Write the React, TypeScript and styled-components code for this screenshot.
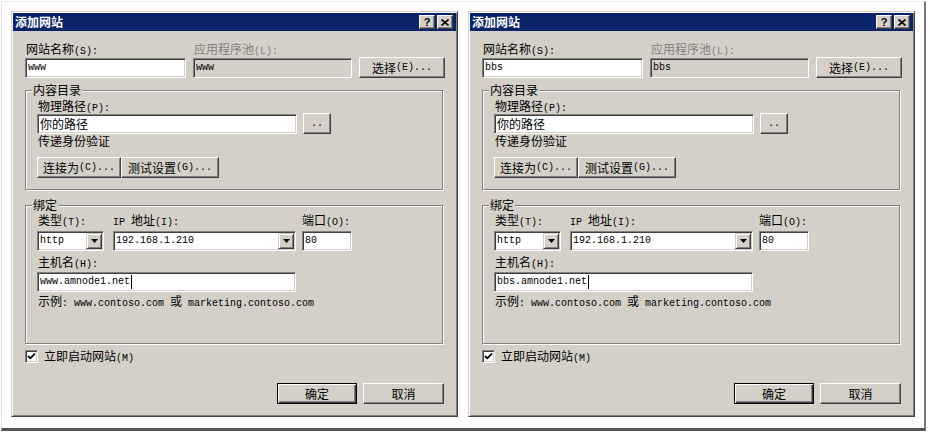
import React from 'react';
import styled, { createGlobalStyle } from 'styled-components';

const GlobalStyle = createGlobalStyle`
  html, body {
    margin: 0;
    padding: 0;
    background: #fff;
  }
  body {
    font-family: "Noto Sans CJK SC", "Liberation Sans", sans-serif;
    font-size: 12px;
    color: #000;
  }
`;

const FACE = '#d4d0c8';

const Frame = styled.div`
  box-sizing: border-box;
  width: 925px;
  height: 430px;
  margin: 1px 0 0 1px;
  background: #fff;
  border-left: 1px solid #e4e4e4;
  border-top: 1px solid #ececec;
  border-right: 2px solid #777;
  border-bottom: 3px solid #555;
  padding: 9px 0 0 9px;
  display: flex;
  gap: 10px;
  align-items: flex-start;
`;

const Window = styled.div`
  box-sizing: border-box;
  width: 447px;
  background: ${FACE};
  border: 1px solid;
  border-color: ${FACE} #404040 #404040 ${FACE};
  box-shadow: inset 1px 1px 0 #fff, inset -1px -1px 0 #808080;
  padding: 1px 1px 12px 1px;
`;

const TitleBar = styled.div`
  height: 18px;
  background: #0a246a;
  display: flex;
  align-items: center;
  padding: 0 3px 0 2px;
  color: #fff;
  font-weight: 700;
  font-size: 12px;
`;

const TitleText = styled.div`
  flex: 1;
  line-height: 18px;
`;

const CaptionButtons = styled.div`
  display: flex;
  gap: 2px;
`;

const CaptionButton = styled.div`
  box-sizing: border-box;
  width: 16px;
  height: 14px;
  background: ${FACE};
  border: 1px solid;
  border-color: #fff #404040 #404040 #fff;
  box-shadow: inset -1px -1px 0 #808080;
  display: flex;
  align-items: center;
  justify-content: center;
  color: #000;
  font-family: "Liberation Sans", sans-serif;
  font-weight: 700;
  font-size: 11px;
  line-height: 1;
`;

const Body = styled.div`
  padding: 11px 12px 0 12px;
`;

const TopGrid = styled.div`
  display: grid;
  grid-template-columns: 161px 159px 86px;
  column-gap: 7px;
  row-gap: 1px;
  align-items: end;
`;

const Label = styled.div<{ $disabled?: boolean; $indent?: number }>`
  height: 14px;
  line-height: 14px;
  white-space: nowrap;
  padding-left: ${p => p.$indent ?? 1}px;
  color: ${p => (p.$disabled ? '#808080' : '#000')};
`;

const Field = styled.div<{ $w?: number; $disabled?: boolean }>`
  box-sizing: border-box;
  height: 20px;
  width: ${p => (p.$w ? `${p.$w}px` : '100%')};
  flex: none;
  background: ${p => (p.$disabled ? FACE : '#fff')};
  border: 1px solid;
  border-color: #808080 #fff #fff #808080;
  box-shadow: inset 1px 1px 0 #404040, inset -1px -1px 0 ${FACE};
  padding: 0 2px;
  display: flex;
  align-items: center;
  white-space: nowrap;
  overflow: hidden;
`;

const FieldValue = styled.div`
  flex: 1;
  display: flex;
  align-items: center;
  line-height: 14px;
`;

const Caret = styled.span`
  display: inline-block;
  width: 1px;
  height: 14px;
  background: #000;
  margin-left: 1px;
`;

const DropButton = styled.div`
  box-sizing: border-box;
  width: 16px;
  height: 16px;
  margin-right: -1px;
  background: ${FACE};
  border: 1px solid;
  border-color: ${FACE} #404040 #404040 ${FACE};
  box-shadow: inset 1px 1px 0 #fff, inset -1px -1px 0 #808080;
  display: flex;
  align-items: center;
  justify-content: center;
`;

const Button = styled.button<{ $w: number; $default?: boolean }>`
  box-sizing: border-box;
  width: ${p => p.$w}px;
  height: 21px;
  flex: none;
  margin: 0;
  padding: 0;
  background: ${FACE};
  font-family: inherit;
  font-size: 12px;
  color: #000;
  line-height: 14px;
  border: 1px solid;
  border-color: ${p => (p.$default ? '#000' : `#fff #404040 #404040 #fff`)};
  box-shadow: ${p =>
    p.$default
      ? `inset 1px 1px 0 #fff, inset -1px -1px 0 #404040, inset -2px -2px 0 #808080`
      : `inset -1px -1px 0 #808080`};
  display: flex;
  align-items: center;
  justify-content: center;
  white-space: nowrap;
`;

const Group = styled.fieldset<{ $pb: number }>`
  margin: 0 1px 0 0;
  padding: 0 11px ${p => p.$pb}px 11px;
  border: 1px solid #808080;
  box-shadow: inset 1px 1px 0 #fff, 1px 1px 0 #fff;
  min-width: 0;
`;

const Legend = styled.legend`
  margin-left: -5px;
  padding: 0 1px;
  line-height: 14px;
  background: ${FACE};
`;

const Row = styled.div<{ $gap: number; $mt?: number }>`
  display: flex;
  align-items: flex-end;
  gap: ${p => p.$gap}px;
  margin-top: ${p => p.$mt ?? 0}px;
`;

const Stack = styled.div<{ $mt?: number }>`
  display: flex;
  flex-direction: column;
  margin-top: ${p => p.$mt ?? 0}px;
`;

const BindRow = styled.div`
  display: flex;
  align-items: flex-end;
`;

const BindCell = styled.div<{ $ml?: number }>`
  display: flex;
  flex-direction: column;
  gap: 4px;
  margin-left: ${p => p.$ml ?? 0}px;
`;

const CheckRow = styled.div`
  display: flex;
  align-items: center;
  gap: 6px;
  margin-top: 5px;
  height: 14px;
`;

const CheckBox = styled.div`
  box-sizing: border-box;
  width: 13px;
  height: 13px;
  background: #fff;
  border: 1px solid;
  border-color: #808080 #fff #fff #808080;
  box-shadow: inset 1px 1px 0 #404040, inset -1px -1px 0 ${FACE};
  display: flex;
  align-items: center;
  justify-content: center;
`;

const Footer = styled.div`
  display: flex;
  justify-content: flex-end;
  gap: 6px;
  margin-top: 20px;
`;

const Latin = styled.span`
  font-family: "Liberation Mono", "DejaVu Sans Mono", monospace;
  font-size: 10px;
  white-space: pre;
`;

const isLatin = (s: string) => /^[\u0000-\u00ff]+$/.test(s);

const T = ({ children }: { children: string }) => {
  const parts = children.split(/([\u0000-\u00ff]+)/).filter(Boolean);
  return (
    <>
      {parts.map((p, i) => (isLatin(p) ? <Latin key={i}>{p}</Latin> : <span key={i}>{p}</span>))}
    </>
  );
};

const Arrow = () => (
  <svg width="7" height="4" viewBox="0 0 7 4">
    <path d="M0 0H7L3.5 4Z" fill="#000" />
  </svg>
);

const CloseGlyph = () => (
  <svg width="8" height="7" viewBox="0 0 8 7">
    <path d="M0.5 0.5L7.5 6.5M7.5 0.5L0.5 6.5" stroke="#000" strokeWidth="1.6" />
  </svg>
);

const Check = () => (
  <svg width="9" height="9" viewBox="0 0 9 9">
    <path d="M1 4L3.3 6.3L8 1.6" stroke="#000" strokeWidth="1.8" fill="none" />
  </svg>
);

const Combo = ({ w, value }: { w: number; value: string }) => (
  <Field $w={w}>
    <FieldValue>
      <T>{value}</T>
    </FieldValue>
    <DropButton>
      <Arrow />
    </DropButton>
  </Field>
);

const AddSiteDialog = ({ site }: { site: string }) => (
  <Window>
    <TitleBar>
      <TitleText>添加网站</TitleText>
      <CaptionButtons>
        <CaptionButton>?</CaptionButton>
        <CaptionButton>
          <CloseGlyph />
        </CaptionButton>
      </CaptionButtons>
    </TitleBar>
    <Body>
      <TopGrid>
        <Label>
          <T>网站名称(S):</T>
        </Label>
        <Label $disabled>
          <T>应用程序池(L):</T>
        </Label>
        <div />
        <Field>
          <FieldValue>
            <T>{site}</T>
          </FieldValue>
        </Field>
        <Field $disabled>
          <FieldValue>
            <T>{site}</T>
          </FieldValue>
        </Field>
        <Button $w={86}>
          <T>选择(E)...</T>
        </Button>
      </TopGrid>

      <Stack $mt={5}>
        <Group $pb={11}>
          <Legend>内容目录</Legend>
          <Stack $mt={2}>
            <Label>
              <T>物理路径(P):</T>
            </Label>
            <Row $gap={6}>
              <Field $w={260}>
                <FieldValue>你的路径</FieldValue>
              </Field>
              <Button $w={28}>
                <T>..</T>
              </Button>
            </Row>
            <Label>传递身份验证</Label>
            <Row $gap={0} $mt={9}>
              <Button $w={84}>
                <T>连接为(C)...</T>
              </Button>
              <Button $w={98}>
                <T>测试设置(G)...</T>
              </Button>
            </Row>
          </Stack>
        </Group>
      </Stack>

      <Stack $mt={8}>
        <Group $pb={35}>
          <Legend>绑定</Legend>
          <Stack $mt={1}>
            <BindRow>
              <BindCell>
                <Label>
                  <T>类型(T):</T>
                </Label>
                <Combo w={67} value="http" />
              </BindCell>
              <BindCell $ml={9}>
                <Label $indent={0}>
                  <T>IP 地址(I):</T>
                </Label>
                <Combo w={183} value="192.168.1.210" />
              </BindCell>
              <BindCell $ml={6}>
                <Label $indent={0}>
                  <T>端口(O):</T>
                </Label>
                <Field $w={50}>
                  <FieldValue>
                    <T>80</T>
                  </FieldValue>
                </Field>
              </BindCell>
            </BindRow>
            <Stack $mt={4}>
              <Label>
                <T>主机名(H):</T>
              </Label>
              <Stack $mt={3}>
                <Field $w={259}>
                  <FieldValue>
                    <T>{`${site}.amnode1.net`}</T>
                    <Caret />
                  </FieldValue>
                </Field>
              </Stack>
              <Stack $mt={2}>
                <Label>
                  <T>示例: www.contoso.com 或 marketing.contoso.com</T>
                </Label>
              </Stack>
            </Stack>
          </Stack>
        </Group>
      </Stack>

      <CheckRow>
        <CheckBox>
          <Check />
        </CheckBox>
        <Label $indent={0}>
          <T>立即启动网站(M)</T>
        </Label>
      </CheckRow>

      <Footer>
        <Button $w={80} $default>
          确定
        </Button>
        <Button $w={81}>取消</Button>
      </Footer>
    </Body>
  </Window>
);

export default function App() {
  return (
    <>
      <GlobalStyle />
      <Frame>
        <AddSiteDialog site="www" />
        <AddSiteDialog site="bbs" />
      </Frame>
    </>
  );
}
